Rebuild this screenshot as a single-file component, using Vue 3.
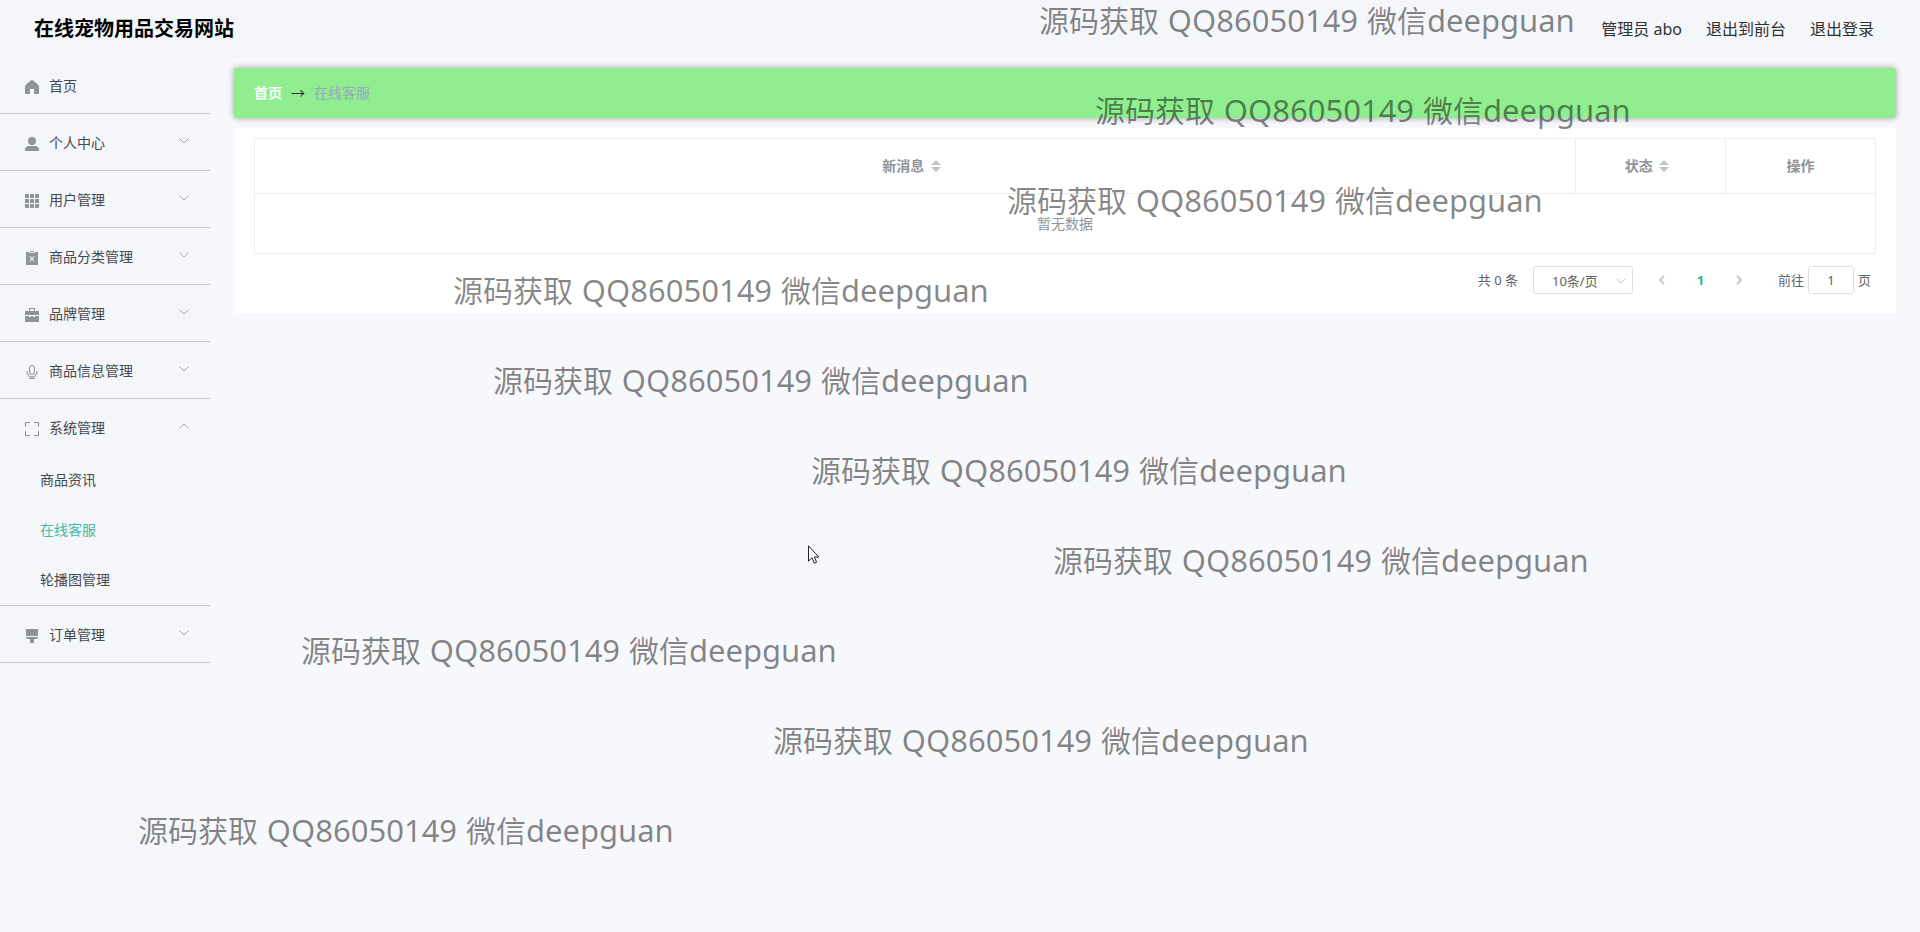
<template>
  <div class="app-wrapper">
    <!-- 顶部导航 -->
    <header class="navbar">
      <h1 class="title">在线宠物用品交易网站</h1>
      <nav class="right-menu">
        <span>管理员 abo</span>
        <a href="#" @click.prevent>退出到前台</a>
        <a href="#" @click.prevent>退出登录</a>
      </nav>
    </header>

    <div class="body">
      <!-- 左侧菜单 -->
      <aside class="sidebar">
        <ul class="menu">
          <li v-for="item in menus" :key="item.name" class="menu-item">
            <button type="button" class="menu-title" @click="toggle(item)">
              <svg class="menu-icon" viewBox="0 0 14 14" aria-hidden="true">
                <path :d="icons[item.icon]" fill="currentColor" fill-rule="evenodd" />
              </svg>
              <span class="menu-name">{{ item.name }}</span>
              <svg v-if="item.children" class="arrow" :class="{ opened: item.open }" viewBox="0 0 12 12" aria-hidden="true">
                <path d="M1.5 3.5 6 8l4.5-4.5" fill="none" stroke="currentColor" />
              </svg>
            </button>
            <ul v-if="item.open" class="submenu">
              <li v-for="child in item.children" :key="child">
                <a href="#" :class="{ active: child === current }" @click.prevent="current = child">{{ child }}</a>
              </li>
            </ul>
          </li>
        </ul>
      </aside>

      <!-- 内容区域 -->
      <main class="main">
        <div class="breadcrumb">
          <a href="#" @click.prevent>首页</a>
          <span class="separator">→</span>
          <span class="here">在线客服</span>
        </div>

        <section class="card">
          <table class="table">
            <thead>
              <tr>
                <th>
                  新消息
                  <svg class="sort" viewBox="0 0 10 12" aria-hidden="true"><path d="M5 0l5 5H0zM0 7h10l-5 5z" fill="currentColor" /></svg>
                </th>
                <th class="narrow">
                  状态
                  <svg class="sort" viewBox="0 0 10 12" aria-hidden="true"><path d="M5 0l5 5H0zM0 7h10l-5 5z" fill="currentColor" /></svg>
                </th>
                <th class="narrow">操作</th>
              </tr>
            </thead>
            <tbody>
              <tr>
                <td colspan="3">暂无数据</td>
              </tr>
            </tbody>
          </table>

          <div class="pagination">
            <span class="total">共 0 条</span>
            <div class="size-box">
              <select v-model="pageSize" aria-label="每页条数">
                <option :value="10">10条/页</option>
                <option :value="20">20条/页</option>
              </select>
              <svg class="select-arrow" viewBox="0 0 12 12" aria-hidden="true">
                <path d="M2 4l4 4 4-4" fill="none" stroke="currentColor" />
              </svg>
            </div>
            <div class="pager">
              <button type="button" disabled aria-label="上一页">
                <svg viewBox="0 0 12 12"><path d="M8 2L4 6l4 4" fill="none" stroke="currentColor" stroke-width="1.5" /></svg>
              </button>
              <button type="button" class="number">1</button>
              <button type="button" disabled aria-label="下一页">
                <svg viewBox="0 0 12 12"><path d="M4 2l4 4-4 4" fill="none" stroke="currentColor" stroke-width="1.5" /></svg>
              </button>
            </div>
            <label class="jump">前往<input v-model="page" type="text">页</label>
          </div>
        </section>
      </main>
    </div>

    <!-- 水印 -->
    <div class="watermark">
      <span
        v-for="(mark, i) in marks"
        :key="i"
        :style="{ left: mark + 'px', top: i * 90 + 'px' }"
      >源码获取 <b class="qq">QQ86050149</b> 微信<b>deepguan</b></span>
    </div>

    <svg class="cursor" viewBox="0 0 12 20" aria-hidden="true">
      <path d="M.5 .8v15.4l3.5-3.4 2.3 5.4 2.3-1-2.3-5.2h4.5z" fill="#fff" stroke="#222" />
    </svg>
  </div>
</template>

<script setup>
import { ref, reactive } from 'vue';

const current = ref('在线客服');
const pageSize = ref(10);
const page = ref('1');

// 菜单图标
const icons = {
  home: 'M7 0C8 0 14 5 14 6.500V14H9V9H5v5H0V6.500C0 5 6 0 7 0z',
  user: 'M7 0a4 4 0 1 1 0 8 4 4 0 0 1 0-8zM4 9h6q4 0 4 4v1H0v-1q0-4 4-4z',
  grid: 'M0 0h4v4H0zM5 0h4v4H5zM10 0h4v4h-4zM0 5h4v4H0zM5 5h4v4H5zM10 5h4v4h-4zM0 10h4v4H0zM5 10h4v4H5zM10 10h4v4h-4z',
  order: 'M5 0h4v1H5zM1 1h3v1h6V1h3v13H1zM4.3 5.3 6.2 7.7 4.3 10.3h1.2L7 8.4l1.5 1.9h1.2L7.8 7.7l1.9-2.4H8.5L7 7 5.5 5.3z',
  cooperation: 'M4 0h6v3h4v4H0V3h4zM5 1v2h4V1zM0 8h4v1h2V8h2v1h2V8h4v6H0z',
  microphone: 'M7 0a3 3 0 0 1 3 3v4a3 3 0 0 1-6 0V3a3 3 0 0 1 3-3zM7 1a2 2 0 0 0-2 2v4a2 2 0 0 0 4 0V3a2 2 0 0 0-2-2zM1.5 6h1v1a4.5 4.5 0 0 0 9 0V6h1v1a5.5 5.5 0 0 1-5 5.5V13H10v1H4v-1h2.500v-.5a5.5 5.5 0 0 1-5-5.5z',
  fullscreen: 'M0 0h5v1H1v4H0zM9 0h5v5h-1V1H9zM0 9h1v4h4v1H0zM13 9h1v5H9v-1h4z',
  brush: 'M1 0h12v7H1zM1 8h12q0 2-2 2H9v4H5v-4H3Q1 10 1 8z'
};

const menus = reactive([
  { name: '首页', icon: 'home' },
  { name: '个人中心', icon: 'user', children: ['修改密码', '个人信息'] },
  { name: '用户管理', icon: 'grid', children: ['用户'] },
  { name: '商品分类管理', icon: 'order', children: ['商品分类'] },
  { name: '品牌管理', icon: 'cooperation', children: ['品牌'] },
  { name: '商品信息管理', icon: 'microphone', children: ['商品信息'] },
  { name: '系统管理', icon: 'fullscreen', open: true, children: ['商品资讯', '在线客服', '轮播图管理'] },
  { name: '订单管理', icon: 'brush', children: ['订单'] }
]);

// 每行水印的水平位置
const marks = [1039, 1095, 1007, 453, 493, 811, 1053, 301, 773, 138];

const toggle = (item) => {
  if (item.children) {
    item.open = !item.open;
  }
};
</script>

<style>
body {
  background: #f7f8fb;
}
</style>

<style scoped>
.app-wrapper {
  position: relative;
  min-height: 100vh;
  display: flex;
  flex-direction: column;
  overflow: hidden;
  font-family: "Noto Sans", "Noto Sans CJK SC", sans-serif;
  font-size: 14px;
  color: #303133;
}

a {
  color: inherit;
  text-decoration: none;
}

button,
input,
select {
  font: inherit;
}

ul {
  list-style: none;
  margin: 0;
  padding: 0;
}

/* 顶部导航 */
.navbar {
  height: 57px;
  display: flex;
  align-items: center;
  justify-content: space-between;
  padding: 0 46px 0 34px;
  background: #f4f6fa;
}

.title {
  margin: 0;
  font-size: 20px;
  line-height: 28px;
  color: #000;
}

.right-menu {
  display: flex;
  gap: 24px;
  padding-bottom: 2px;
  font-size: 16px;
}

.body {
  flex: 1;
  display: flex;
}

/* 左侧菜单 */
.sidebar {
  width: 210px;
  flex: none;
  background: #f4f6fa;
}

.menu-item {
  border-bottom: 1px solid #c6c9d0;
}

.menu-title {
  width: 100%;
  height: 56px;
  display: flex;
  align-items: center;
  padding: 0 20px 0 25px;
  border: none;
  background: none;
  color: #46494f;
  text-align: left;
  cursor: pointer;
}

.menu-icon {
  width: 14px;
  height: 14px;
  margin-top: 3px;
  margin-right: 10px;
  color: #909399;
}

.menu-name {
  flex: 1;
}

.arrow {
  width: 12px;
  height: 12px;
  margin-bottom: 2px;
  color: #a3a6ad;
}

.arrow.opened {
  transform: rotate(180deg);
}

.submenu a {
  display: block;
  padding-left: 40px;
  line-height: 50px;
  color: #46494f;
}

.submenu a.active {
  color: #42b9a6;
}

/* 内容区域 */
.main {
  flex: 1;
  min-width: 0;
  padding: 11px 24px;
}

.breadcrumb {
  height: 50px;
  box-sizing: border-box;
  display: flex;
  align-items: center;
  gap: 9px;
  padding: 0 20px 2px;
  border-radius: 2px;
  background: #90ee90;
  box-shadow: 0 0 6px rgba(0, 0, 0, 0.35);
}

.breadcrumb a {
  color: #fff;
  font-weight: 700;
}

.separator {
  width: 14px;
  font-family: "Noto Sans CJK SC", sans-serif;
}

.here {
  color: #97a8be;
}

.card {
  margin-top: 10px;
  padding: 10px 20px 19px;
  background: #fff;
}

.table {
  width: 100%;
  table-layout: fixed;
  border-collapse: collapse;
  text-align: center;
  color: #909399;
}

.table th,
.table td {
  box-sizing: border-box;
  padding: 0 0 2px;
  border: 1px solid #ebeef5;
}

.table th {
  height: 55px;
}

.table td {
  height: 60px;
}

.narrow {
  width: 150px;
}

.sort {
  width: 10px;
  height: 12px;
  margin: 0 7px 0 3px;
  vertical-align: -1px;
  color: #c0c4cc;
}

/* 分页 */
.pagination {
  display: flex;
  align-items: center;
  justify-content: flex-end;
  margin-top: 12px;
  padding-right: 5px;
  font-size: 13px;
  line-height: 28px;
  color: #606266;
}

.size-box {
  position: relative;
  margin: 0 14px 0 15px;
}

.size-box select {
  display: block;
  width: 100px;
  height: 28px;
  padding: 0 25px 0 18px;
  border: 1px solid #dcdfe6;
  border-radius: 3px;
  appearance: none;
  background: #fff;
  color: #606266;
}

.select-arrow {
  position: absolute;
  top: 9px;
  right: 6px;
  width: 12px;
  height: 12px;
  color: #c0c4cc;
}

.pager {
  display: flex;
  margin-right: 24px;
}

.pager button {
  width: 30px;
  height: 28px;
  display: flex;
  align-items: center;
  justify-content: center;
  padding: 0;
  border: none;
  background: none;
  color: #b4b8c0;
}

.pager .number {
  width: 47px;
  color: #1abc8c;
  font-weight: 700;
}

.pager svg {
  width: 12px;
  height: 12px;
}

.jump {
  display: flex;
  align-items: center;
}

.jump input {
  width: 46px;
  height: 28px;
  box-sizing: border-box;
  margin: 0 4px;
  padding: 0;
  border: 1px solid #dcdfe6;
  border-radius: 3px;
  text-align: center;
  color: #606266;
}

/* 水印 */
.watermark {
  position: absolute;
  inset: 0;
  overflow: hidden;
  pointer-events: none;
  font-size: 30px;
  line-height: 40px;
  color: rgba(0, 0, 0, 0.47);
}

.watermark span {
  position: absolute;
  white-space: nowrap;
}

.watermark b {
  font-size: 31px;
  font-weight: 400;
}

.watermark .qq {
  margin: 0 1px;
}

.cursor {
  position: absolute;
  left: 808px;
  top: 545px;
  width: 12px;
  height: 20px;
}
</style>
